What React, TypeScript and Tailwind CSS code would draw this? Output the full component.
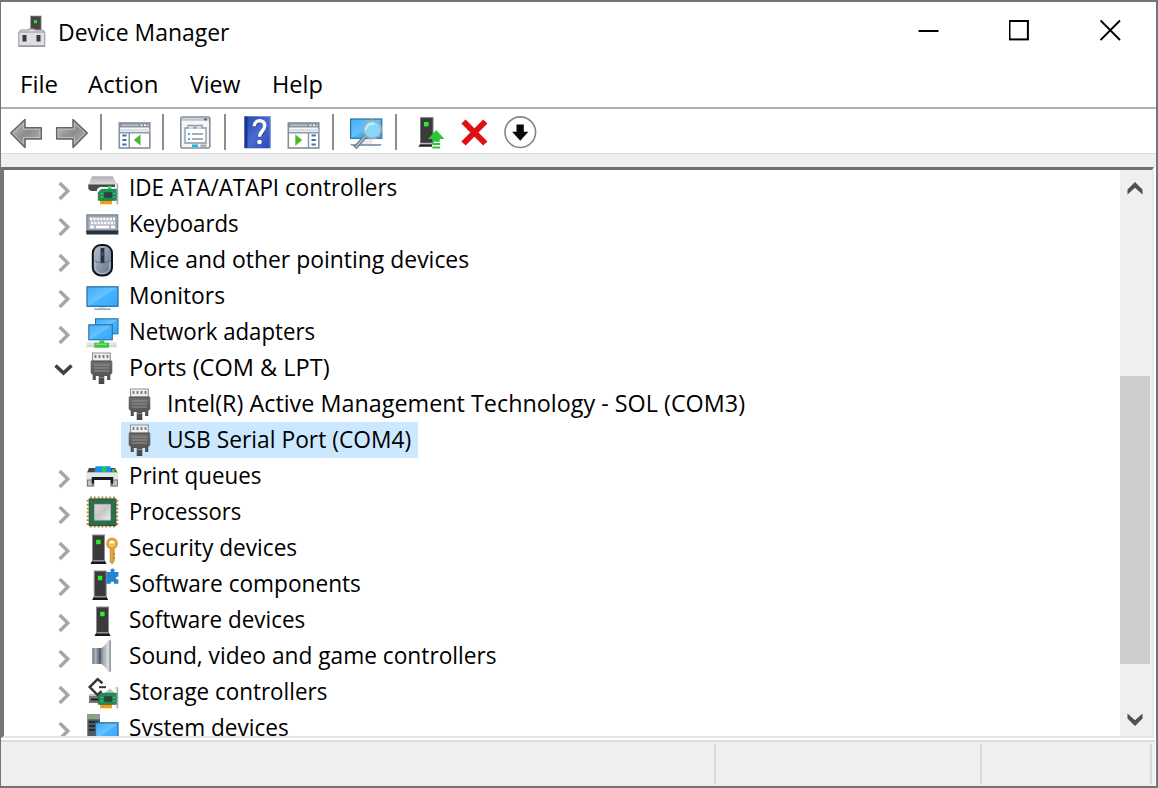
import { useLayoutEffect, useRef, useState, type ReactNode } from "react";

function Label({ text, width }: { text: string; width: number }) {
  const ref = useRef<HTMLSpanElement>(null);
  const [scale, setScale] = useState(0.92);
  useLayoutEffect(() => {
    if (ref.current) setScale(width / ref.current.offsetWidth);
  }, [text, width]);
  return (
    <span className="block whitespace-nowrap" style={{ width }}>
      <span ref={ref} className="inline-block origin-left" style={{ transform: `scaleX(${scale})` }}>
        {text}
      </span>
    </span>
  );
}

function Icon({ children }: { children?: ReactNode }) {
  return (
    <svg viewBox="0 0 32 32" className="block size-8 shrink-0 overflow-visible">
      {children}
    </svg>
  );
}

function Defs() {
  return (
    <svg className="absolute size-0">
      <defs>
        <linearGradient id="screen" x1="0" y1="0" x2="1" y2="1">
          <stop offset="0" stopColor="#3fabf8" />
          <stop offset="0.5" stopColor="#67c3ff" />
          <stop offset="0.52" stopColor="#45b4ff" />
          <stop offset="1" stopColor="#35a8fb" />
        </linearGradient>
        <linearGradient id="arrow" x1="0" y1="0" x2="1" y2="1">
          <stop offset="0" stopColor="#c8c8c8" />
          <stop offset="0.5" stopColor="#8d8d8d" />
          <stop offset="1" stopColor="#b5b5b5" />
        </linearGradient>
        <linearGradient id="disk" x1="0" y1="0" x2="0" y2="1">
          <stop offset="0" stopColor="#b4b4b6" />
          <stop offset="1" stopColor="#dcdcde" />
        </linearGradient>
        <linearGradient id="cone" x1="0" y1="0" x2="1" y2="0">
          <stop offset="0" stopColor="#59626d" />
          <stop offset="0.35" stopColor="#a3a9b0" />
          <stop offset="0.8" stopColor="#dde0e3" />
          <stop offset="1" stopColor="#9a9fa5" />
        </linearGradient>
        <linearGradient id="magnet" x1="0" y1="0" x2="1" y2="0">
          <stop offset="0" stopColor="#5d6b7a" />
          <stop offset="0.4" stopColor="#a9b5c1" />
          <stop offset="1" stopColor="#56626f" />
        </linearGradient>
        <linearGradient id="mouse" x1="0" y1="0" x2="1" y2="1">
          <stop offset="0" stopColor="#b9c6d6" />
          <stop offset="1" stopColor="#5d6f86" />
        </linearGradient>
        <linearGradient id="die" x1="0" y1="0" x2="1" y2="1">
          <stop offset="0" stopColor="#d8d8d8" />
          <stop offset="0.5" stopColor="#c6c6c6" />
          <stop offset="1" stopColor="#eeeeee" />
        </linearGradient>
        <linearGradient id="help" x1="0" y1="0" x2="1" y2="1">
          <stop offset="0" stopColor="#2447a8" />
          <stop offset="0.5" stopColor="#4a6bd0" />
          <stop offset="1" stopColor="#2848b0" />
        </linearGradient>
        <linearGradient id="plug" x1="0" y1="0" x2="0" y2="1">
          <stop offset="0" stopColor="#707070" />
          <stop offset="1" stopColor="#454545" />
        </linearGradient>
      </defs>
    </svg>
  );
}

function Tower({ x }: { x: number }) {
  return (
    <g transform={`translate(${x} 0)`}>
      <path d="M-1.5 32l1.5-3h13l1.5 3z" fill="#15181b" />
      <rect x="0.7" y="28.2" width="11.6" height="1.2" fill="#c6cbd0" />
      <rect x="0.5" y="3" width="12" height="25.5" fill="#3b3b3b" stroke="#8b8f94" strokeWidth="1" />
      <rect x="4.2" y="7.8" width="4.4" height="4.4" fill="#2cf02c" />
    </g>
  );
}

function Board() {
  return (
    <g>
      <path d="M14 28h12v4.3H14z" fill="#f9a11b" />
      <path d="M17 28v4M20 28v4M23 28v4" stroke="#e08a0c" strokeWidth="0.8" />
      <path d="M12.3 20.5l3-3.2H30.5v11H12.3z" fill="#1d8f58" stroke="#14703f" strokeWidth="0.8" />
      <rect x="18.2" y="20.2" width="8" height="5.6" fill="#2a4438" />
      <path d="M15 21.5h1.6M15 25h1.6M27.5 21.5h1.6M27.5 25h1.6" stroke="#7cd6a2" strokeWidth="1.2" />
      <path d="M31.4 11.5v21" stroke="#a4a9ae" strokeWidth="1.6" fill="none" />
      <path d="M29 12h3" stroke="#c4c7ca" strokeWidth="1.2" />
    </g>
  );
}

const Port = (
  <Icon>
    <path d="M6.5 9.5V1h17.8v8.5" fill="#eeeeee" stroke="#929292" strokeWidth="1.1" />
    <path d="M9.5 3v3M13.5 3v3M17.5 3v3M21.5 3v3" stroke="#777777" strokeWidth="1.8" />
    <path d="M4.7 9h21.6v12l-2 2v5h-3.2v-4h-2.8v8h-5.6v-8h-2.9v4H6.7v-5l-2-2z" fill="url(#plug)" />
    <path d="M5.5 9h20" stroke="#3f3f3f" strokeWidth="1" />
    <path d="M8 13h15M8 16h15M8 19h15" stroke="#949494" strokeWidth="1" />
    <path d="M13 25.5h5" stroke="#858585" strokeWidth="1" />
  </Icon>
);

const icons: Record<string, ReactNode> = {
  ide: (
    <Icon>
      <path d="M5.7 4.7H27L31 13H2.3z" fill="url(#disk)" />
      <path d="M6 4.8h21" stroke="#a5a5a8" strokeWidth="0.8" />
      <path d="M2.3 12.5H31V18l-2 1H5l-2.7-2z" fill="#46494d" />
      <path d="M2.5 12.5h28" stroke="#8d8d90" strokeWidth="1" />
      <path d="M11 20v-3l3-2h15v-3h3v8z" fill="#ffffff" />
      <Board />
      <rect x="22" y="14" width="3.4" height="3" fill="#2de13d" />
    </Icon>
  ),
  keyboard: (
    <Icon>
      <rect x="0.8" y="6.8" width="31" height="16.5" fill="#9aa3ae" stroke="#747f8b" strokeWidth="1" />
      <rect x="3" y="9" width="26.5" height="12" fill="#b3bbc4" />
      <rect x="0.3" y="22.5" width="32" height="4" fill="#27313c" />
      <path d="M4 11h25M5 15h24" stroke="#ffffff" strokeWidth="2.3" strokeDasharray="2.2 1.1" />
      <path d="M4 19h4M10 19h13M25 19h4" stroke="#ffffff" strokeWidth="2.3" />
    </Icon>
  ),
  mouse: (
    <Icon>
      <rect x="6.8" y="1" width="19.2" height="30.4" rx="8" fill="url(#mouse)" stroke="#111316" strokeWidth="2" />
      <path d="M9 18v5c0 4 3 6.5 7.4 6.5s7.4-2.5 7.4-6.5v-5" stroke="#c1cad5" strokeWidth="0.9" fill="none" />
      <path d="M9 17.5q7.4 3 14.8 0" stroke="#596a7e" strokeWidth="0.8" fill="none" />
      <rect x="14.6" y="4" width="3.8" height="14.8" fill="#2c3137" />
      <path d="M16.5 8v4" stroke="#59616a" strokeWidth="1.2" />
    </Icon>
  ),
  monitor: (
    <Icon>
      <rect x="1" y="6.8" width="31" height="19.5" fill="url(#screen)" stroke="#256c9f" strokeWidth="1.2" />
      <path d="M13 27h7v1.3h-7z" fill="#d6dce2" />
      <path d="M8.3 29.2h16.4" stroke="#8c9baa" strokeWidth="1.4" />
    </Icon>
  ),
  network: (
    <Icon>
      <rect x="9.5" y="2.8" width="22.5" height="15" fill="url(#screen)" stroke="#2875a8" strokeWidth="1.1" />
      <rect x="2.8" y="8.8" width="23.5" height="15" fill="url(#screen)" stroke="#2470a2" strokeWidth="1.1" />
      <path d="M0.7 26.5h30v4.8h-30z" fill="#d4d4d4" />
      <path d="M0.7 28h30" stroke="#efefef" strokeWidth="1.2" />
      <path d="M13.3 24.5h5v2.3H23v5H8.3v-5h5z" fill="#42c443" />
      <path d="M10 28.3h11" stroke="#83e77b" strokeWidth="1.2" />
    </Icon>
  ),
  port: Port,
  printer: (
    <Icon>
      <path d="M3 8h26l3 5v14H.7V13z" fill="#a9adb1" />
      <path d="M3 8h26l1.8 4H1.5z" fill="#44484d" />
      <path d="M1 12.8h31V19H1z" fill="#e3e5e8" />
      <path d="M1 20h31v6H1z" fill="#777d83" />
      <path d="M2 20.5h4v5H2zM27 20.5h4v5h-4z" fill="#bcc2c7" />
      <path d="M9.5 6.2h15l1 5.8H8.5z" fill="#1690e7" />
      <path d="M16 7h4.5v5H16z" fill="#20cf49" />
      <path d="M26 10.5h3" stroke="#2ee333" strokeWidth="2.4" />
      <path d="M5.7 17h21.5v6.5h-2.5V20H8v3.5H5.7z" fill="#181b1f" />
      <path d="M8.3 20h16v8h-16z" fill="#ffffff" />
    </Icon>
  ),
  cpu: (
    <Icon>
      <path d="M4 1.5h25M4 30.5h25" stroke="#bd8b2d" strokeWidth="2" strokeDasharray="1.8 2.05" />
      <path d="M1.7 4v25M31.3 4v25" stroke="#bd8b2d" strokeWidth="2" strokeDasharray="1.8 2.05" />
      <rect x="3.3" y="3" width="26.5" height="26.5" fill="#2f6e4d" stroke="#23563c" strokeWidth="1.2" />
      <rect x="8.5" y="8.3" width="16" height="15.8" fill="url(#die)" stroke="#b0b9b3" strokeWidth="0.8" />
    </Icon>
  ),
  security: (
    <Icon>
      <Tower x={6} />
      <path d="M24.2 16h4v13l-2 3-2-2z" fill="#e2a536" stroke="#bd8427" strokeWidth="0.7" />
      <circle cx="26" cy="11.5" r="4.4" fill="#fff5d6" stroke="#dba33b" strokeWidth="3" />
      <path d="M23.7 12.5h4.8" stroke="#e4b44e" strokeWidth="2" />
      <path d="M28 21v2M28 25v2" stroke="#9f6b16" strokeWidth="1" />
    </Icon>
  ),
  component: (
    <Icon>
      <path d="M20 4h4.6V1.2q1.9-1.4 3.8 0V4h4v4.4q-2.6 0-2.6 1.6t2.6 1.6v4.2h-4.2q0-2.2-1.8-2.2t-1.8 2.2H20z" fill="#2683cf" />
      <Tower x={7.7} />
    </Icon>
  ),
  software: (
    <Icon>
      <Tower x={10} />
    </Icon>
  ),
  sound: (
    <Icon>
      <path d="M13.5 9Q19 6.5 22.5.3h2v31.5h-2Q19 25.5 13.5 23z" fill="url(#cone)" />
      <path d="M24.2.5v31" stroke="#7b8188" strokeWidth="0.9" />
      <rect x="6.3" y="8" width="7.6" height="16" fill="url(#magnet)" />
      <path d="M14 8v16" stroke="#454e58" strokeWidth="1" />
    </Icon>
  ),
  storage: (
    <Icon>
      <path d="M3 19h11v8H3z" fill="#74777b" />
      <path d="M3 19h11" stroke="#c4c4c6" strokeWidth="2" />
      <path d="M5 23.5h8" stroke="#1d2022" strokeWidth="2" />
      <path d="M16.5 7.2l-4.9-4.1-7.9 8 7.9 8 4-4" stroke="#353638" strokeWidth="2.5" fill="none" />
      <path d="M13 11.2h7" stroke="#353638" strokeWidth="2" />
      <path d="M18 17.5l6-5 5 5z" fill="#b9bcc0" />
      <Board />
    </Icon>
  ),
  system: (
    <Icon>
      <path d="M1.3 2.3H14v27H1.3z" fill="#55595e" />
      <path d="M1.3 2.3H14v5H1.3z" fill="#96999d" />
      <path d="M4 5h3" stroke="#26df2c" strokeWidth="2.5" />
      <path d="M3 10h9M3 14h6M3 18h6" stroke="#25282b" strokeWidth="2" />
      <rect x="9.5" y="10.8" width="22.5" height="17" fill="url(#screen)" stroke="#246b9d" strokeWidth="1.2" />
    </Icon>
  ),
};

type Row = { icon: string; text: string; width: number; kind?: "open" | "child"; selected?: boolean };

const rows: Row[] = [
  { icon: "ide", text: "IDE ATA/ATAPI controllers", width: 268 },
  { icon: "keyboard", text: "Keyboards", width: 110 },
  { icon: "mouse", text: "Mice and other pointing devices", width: 340 },
  { icon: "monitor", text: "Monitors", width: 96 },
  { icon: "network", text: "Network adapters", width: 186 },
  { icon: "port", text: "Ports (COM & LPT)", width: 201, kind: "open" },
  { icon: "port", text: "Intel(R) Active Management Technology - SOL (COM3)", width: 578, kind: "child" },
  { icon: "port", text: "USB Serial Port (COM4)", width: 244, kind: "child", selected: true },
  { icon: "printer", text: "Print queues", width: 132 },
  { icon: "cpu", text: "Processors", width: 112 },
  { icon: "security", text: "Security devices", width: 168 },
  { icon: "component", text: "Software components", width: 232 },
  { icon: "software", text: "Software devices", width: 176 },
  { icon: "sound", text: "Sound, video and game controllers", width: 368 },
  { icon: "storage", text: "Storage controllers", width: 198 },
  { icon: "system", text: "System devices", width: 160 },
];

function TreeRow({ row }: { row: Row }) {
  if (row.kind === "child") {
    return (
      <div className="flex h-9 shrink-0 pl-[116px]">
        <div className={row.selected ? "flex w-[297px] items-center bg-[#cce8ff] pl-[3px]" : "flex items-center pl-[3px]"}>
          {icons[row.icon]}
          <div className="pb-[2px] pl-[10.5px]">
            <Label text={row.text} width={row.width} />
          </div>
        </div>
      </div>
    );
  }
  return (
    <div className="flex h-9 shrink-0 items-center pl-[47px]">
      <svg viewBox="0 0 24 36" className="mr-[10px] h-9 w-6 shrink-0">
        {row.kind === "open" ? (
          <path d="M3.5 15.5l8 7.5 8-7.5" stroke="#404040" strokeWidth="3.6" fill="none" />
        ) : (
          <path d="M7.6 13l8.2 8-8.2 8" stroke="#a6a6a6" strokeWidth="3.4" fill="none" />
        )}
      </svg>
      {icons[row.icon]}
      <div className="pb-[2px] pl-[10.5px]">
        <Label text={row.text} width={row.width} />
      </div>
    </div>
  );
}

function Separator({ className }: { className: string }) {
  return <div className={`h-9 w-[2px] shrink-0 bg-[#8e8e8e] ${className}`} />;
}

function PanelWindow({ flipped }: { flipped?: boolean }) {
  return (
    <Icon>
      <rect x="0.3" y="7" width="30.5" height="25" fill="#ffffff" stroke="#868d9b" strokeWidth="1.6" />
      <rect x="0.5" y="7" width="30" height="4.5" fill="#8a92a2" />
      <path d="M2.5 9.2h17" stroke="#c5cad3" strokeWidth="1.3" />
      <path d="M21.5 9.2h2M25 9.2h2M28.5 9.2h1" stroke="#ffffff" strokeWidth="1.4" />
      <path d="M1 14.3h29.5" stroke="#dce0e6" strokeWidth="3" />
      <path d="M1 16.8h29.5" stroke="#8c93a1" strokeWidth="1.4" />
      {flipped ? (
        <>
          <path d="M20.5 17v15" stroke="#868d9b" strokeWidth="1.4" />
          <path d="M23.5 19.5h4.3M23.5 24h4.3M23.5 28.5h4.3" stroke="#3973ba" strokeWidth="1.8" />
          <path d="M7.5 18.8l6.5 5.3-6.5 5.4z" fill="#45b72d" stroke="#7ccd65" strokeWidth="0.7" />
        </>
      ) : (
        <>
          <path d="M10.2 17v15" stroke="#868d9b" strokeWidth="1.4" />
          <path d="M3.3 19.5h4.3M3.3 24h4.3M3.3 28.5h4.3" stroke="#3973ba" strokeWidth="1.8" />
          <path d="M21.5 18.5v11L14.8 24z" fill="#45b72d" />
        </>
      )}
    </Icon>
  );
}

function Toolbar() {
  return (
    <div className="flex h-[44px] shrink-0 items-center bg-white pl-[9px] pt-[2px]">
      <Icon>
        <path d="M.7 17L15 3.5v8.2h16.3V23H15v8.5z" fill="url(#arrow)" stroke="#666666" strokeWidth="1.5" strokeLinejoin="round" />
        <path d="M3 17L13.5 7.2v6h16.3v8.3H13.5v6.2z" fill="none" stroke="#bdbdbd" strokeWidth="1" />
      </Icon>
      <div className="w-[14px]" />
      <Icon>
        <path d="M31.3 17L17 3.5v8.2H.7V23H17v8.5z" fill="url(#arrow)" stroke="#666666" strokeWidth="1.5" strokeLinejoin="round" />
        <path d="M29 17L18.5 7.2v6H2.2v8.3h16.3v6.2z" fill="none" stroke="#bdbdbd" strokeWidth="1" />
      </Icon>
      <Separator className="ml-[12px] mr-[17px]" />
      <PanelWindow />
      <Separator className="ml-[11px] mr-[16px]" />
      <Icon>
        <rect x="0.8" y="1" width="29" height="31" rx="1.5" fill="#f5f6f8" stroke="#858d9a" strokeWidth="1.6" />
        <path d="M2 3.5h27" stroke="#bdc4cf" strokeWidth="2.5" />
        <path d="M23.5 2.5h4l-2 2.5z" fill="#3b5278" />
        <path d="M5 27V12h3V9.5h6V12h2V9.5h6V12h4v15z" fill="#ffffff" stroke="#8c94a1" strokeWidth="1.3" />
        <path d="M8 12h6M16 12h6" stroke="#adb4bf" strokeWidth="1.2" />
        <path d="M8 18h2M8 23h2" stroke="#29b8dd" strokeWidth="2" />
        <path d="M12 18h11M12 23h11" stroke="#8b929c" strokeWidth="1.5" />
        <path d="M12 29.7h6" stroke="#16b7e8" strokeWidth="2.5" />
        <path d="M20.5 29.7h6" stroke="#a8afba" strokeWidth="2.5" />
      </Icon>
      <Separator className="ml-[12px] mr-[18px]" />
      <Icon>
        <rect x="0.5" y="0.3" width="26" height="32" fill="url(#help)" />
        <path d="M2 .5v31.5" stroke="#173691" strokeWidth="3" />
        <path d="M25.9 .5v31.5" stroke="#6681d7" strokeWidth="1" />
        <path d="M10.9 10.8c0-7 10.5-7.5 10.5-.5 0 5-5.2 5.5-5.2 11" stroke="#253a7d" strokeWidth="3.6" fill="none" />
        <path d="M10.3 10.3c0-7 10.5-7.5 10.5-.5 0 5-5.2 5.5-5.2 11" stroke="#ffffff" strokeWidth="3.5" fill="none" />
        <circle cx="15.5" cy="26" r="2.3" fill="#ffffff" />
      </Icon>
      <div className="w-[12px]" />
      <PanelWindow flipped />
      <Separator className="ml-[12px] mr-[16px]" />
      <Icon>
        <path d="M0 28h32l-2 2H2z" fill="#8da0b7" />
        <path d="M11 22h11v6H11z" fill="#e5ebf0" />
        <rect x="0.6" y="3" width="31.2" height="19.3" fill="url(#screen)" stroke="#27739f" strokeWidth="1.2" />
        <path d="M15.5 20L5 32" stroke="#677989" strokeWidth="4" />
        <path d="M15 20.5L5.5 31.5" stroke="#b7c5cf" strokeWidth="1.3" />
        <circle cx="22.2" cy="13.5" r="9" fill="#8ad5fb" stroke="#9baab8" strokeWidth="1.8" />
        <path d="M15.5 14c1-5 5-7 9-6" stroke="#c7edff" strokeWidth="2" fill="none" />
      </Icon>
      <Separator className="ml-[13px] mr-[22px]" />
      <Icon>
        <path d="M-.7 30.8L1 28.3h12v2.5z" fill="#202327" />
        <rect x="1.5" y="1.7" width="12.5" height="25.3" fill="#3b3b3b" stroke="#777a7d" strokeWidth="1" />
        <rect x="5" y="6" width="4.6" height="4.4" fill="#2fec30" />
        <path d="M17.2 14l8.3 9h-4.7v2.8H13.5V23H9z" fill="#26c838" />
        <path d="M13.3 28h7.8M13.3 31.5h7.8" stroke="#2bc43a" strokeWidth="1.8" />
      </Icon>
      <div className="w-[10px]" />
      <Icon>
        <path d="M2.5 5.5L24.3 27.5M24.3 5.5L2.5 27.5" stroke="#df1014" strokeWidth="6" />
      </Icon>
      <div className="w-[12px]" />
      <Icon>
        <circle cx="15.3" cy="16.2" r="15.3" fill="#ffffff" stroke="#858585" strokeWidth="1.6" />
        <path d="M11.5 8.5h7.3v7.2h4.5L15.3 24.7l-8.2-9h4.4z" fill="#080808" />
      </Icon>
    </div>
  );
}

function WindowButtons() {
  return (
    <div className="ml-auto flex items-center gap-[70px] pb-[3px] pr-[35px]">
      <svg viewBox="0 0 21 22" className="h-[22px] w-[21px]">
        <path d="M.5 12h20" stroke="#000" strokeWidth="2" />
      </svg>
      <svg viewBox="0 0 21 22" className="h-[22px] w-[21px]">
        <rect x="0" y="2" width="18.4" height="18.4" fill="none" stroke="#000" strokeWidth="2" className="translate-x-[0.5px]" />
      </svg>
      <svg viewBox="0 0 21 22" className="h-[22px] w-[21px]">
        <path d="M.5 1.5L20 21M20 1.5L.5 21" stroke="#000" strokeWidth="1.9" />
      </svg>
    </div>
  );
}

export default function App() {
  return (
    <div className="flex h-[788px] w-[1158px] flex-col overflow-hidden border-b-2 border-l border-r-2 border-t-2 border-[#747474] bg-white font-['Open_Sans','Noto_Sans',sans-serif] text-[24px] leading-9 text-black">
      <Defs />
      <header className="flex h-[59px] shrink-0 items-center pl-[17px]">
        <Icon>
          <rect x="12.6" y="0" width="10.5" height="15" fill="#454545" stroke="#999" strokeWidth="0.7" />
          <rect x="16" y="4.2" width="3" height="3" fill="#30e43a" />
          <path d="M.8 16l2-2h8V13h6v1h8l2 2v14.5H.8z" fill="#dfdfe2" stroke="#94969b" strokeWidth="1" />
          <path d="M1 16h25.8" stroke="#92959a" strokeWidth="1" />
          <path d="M4.5 19h4v6.5h-4zM18.5 19h4v6.5h-4z" fill="#34383c" />
          <path d="M1 29.7h25.8" stroke="#a4a6ab" strokeWidth="1.3" />
        </Icon>
        <div className="pl-[8px]">
          <Label text="Device Manager" width={171} />
        </div>
        <WindowButtons />
      </header>
      <nav className="flex h-[46px] shrink-0 items-center pb-px pl-[19px]">
        <div className="w-[68px]"><Label text="File" width={38} /></div>
        <div className="w-[102px]"><Label text="Action" width={70} /></div>
        <div className="w-[82px]"><Label text="View" width={50} /></div>
        <div><Label text="Help" width={51} /></div>
      </nav>
      <div className="h-[2px] shrink-0 bg-[#b0b0b2]" />
      <Toolbar />
      <div className="h-[14px] shrink-0 border-t border-[#dddddd] bg-[#efefef]" />
      <div className="mr-[2px] flex h-[571px] shrink-0 border-b-2 border-l-[3px] border-r-2 border-t-[3px] border-b-[#e4e4e4] border-l-[#777777] border-r-[#e8e8e8] border-t-[#6f6f6f]">
        <main className="flex grow flex-col overflow-hidden pl-[1px]">
          {rows.map((row) => (
            <TreeRow key={row.text} row={row} />
          ))}
        </main>
        <aside className="flex w-[32px] shrink-0 flex-col bg-[#efefef]">
          <svg viewBox="0 0 30 36" className="h-9 w-[30px]">
            <path d="M7.5 19.5L15 12l7.5 7.5v5L15 17.7l-7.5 6.8z" fill="#505050" />
          </svg>
          <div className="mt-[170px] h-[288px] w-[30px] bg-[#cdcdcd]" />
          <svg viewBox="0 0 30 36" className="mt-auto h-9 w-[30px]">
            <path d="M7.5 18.5L15 26l7.5-7.5v-5L15 20.3l-7.5-6.8z" fill="#505050" />
          </svg>
        </aside>
      </div>
      <div className="h-[2px] shrink-0 bg-white" />
      <footer className="mr-px flex grow border-t-2 border-[#dcdcdc] bg-[#efefef] pb-[2px] pt-[2px]">
        <div className="w-[715px] border-r-2 border-[#d7d7d7]" />
        <div className="w-[266px] border-r-2 border-[#d7d7d7]" />
        <div className="w-[170px] border-r-2 border-[#d7d7d7]" />
      </footer>
    </div>
  );
}
